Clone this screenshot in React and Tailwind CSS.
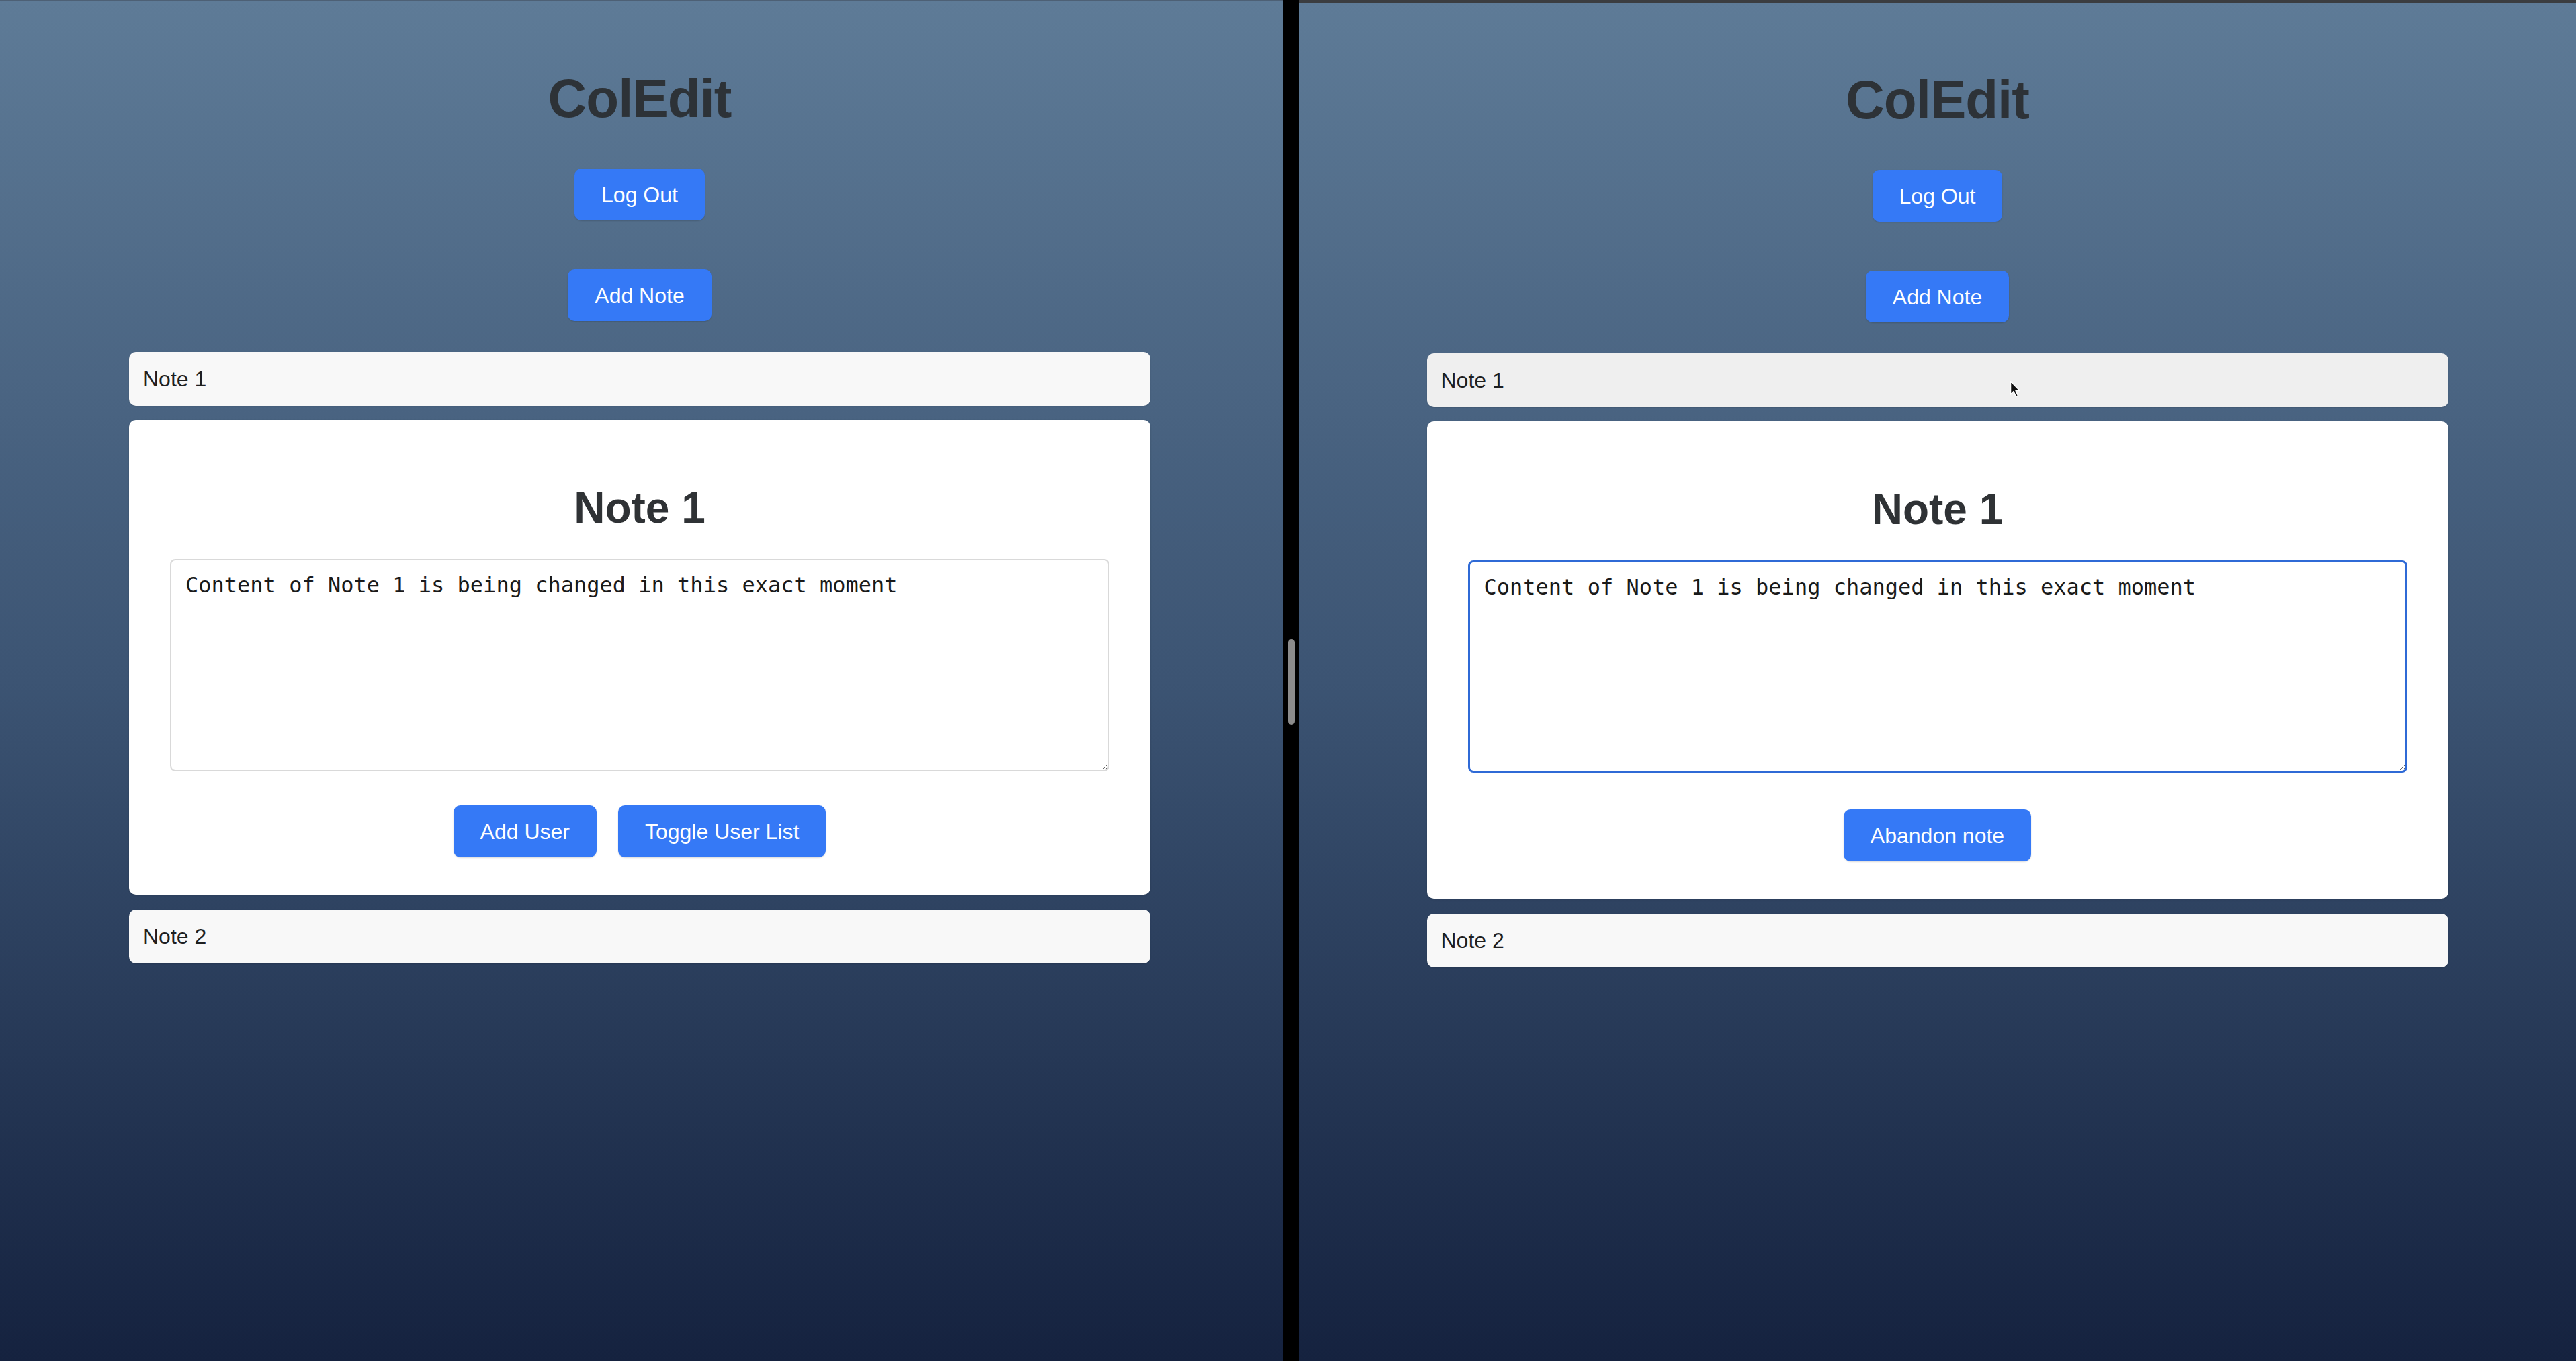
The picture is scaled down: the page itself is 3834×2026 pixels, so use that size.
import React from "react";

const sans = { fontFamily: '"Liberation Sans", Arial, sans-serif' };

function Btn({ children }) {
  return (
    <button className="h-[77px] px-[40px] rounded-[10px] bg-[#3579f6] text-white text-[32px] leading-none shadow-[0_1px_2px_rgba(0,0,0,0.15)]">
      {children}
    </button>
  );
}

function NoteBar({ label, hovered }) {
  return (
    <div
      className={
        "w-[1520px] h-[80px] rounded-[10px] flex items-center pl-[21px] text-[32px] text-[#1f1f1f] shadow-[0_1px_2px_rgba(0,0,0,0.12)] " +
        (hovered ? "bg-[#efefef]" : "bg-[#f8f8f8]")
      }
    >
      {label}
    </div>
  );
}

function Pane({ right }) {
  return (
    <div
      className={
        "relative h-full flex flex-col items-center bg-gradient-to-b from-[#5e7b97] via-[#3c5473] to-[#15223f] " +
        (right ? "w-[1901px]" : "w-[1910px] pr-[6px]")
      }
      style={sans}
    >
      {right ? (
        <div className="absolute left-0 top-0 w-full h-[4px] bg-[#3b3d40]" />
      ) : (
        <div className="absolute left-0 top-0 w-full h-[2px] bg-[#4d6075]" />
      )}
      <h1
        className={
          "h-[92px] flex items-center text-[80px] font-bold text-[#2d3237] tracking-[-1px] " +
          (right ? "mt-[103px]" : "mt-[101px]")
        }
      >
        ColEdit
      </h1>
      <div className="mt-[58px]">
        <Btn>Log Out</Btn>
      </div>
      <div className="mt-[73px]">
        <Btn>Add Note</Btn>
      </div>
      <div className="mt-[46px]">
        <NoteBar label="Note 1" hovered={right} />
      </div>
      <div className="mt-[21px] w-[1520px] bg-white rounded-[10px] flex flex-col items-center pt-[94px] pb-[56px] shadow-[0_1px_3px_rgba(0,0,0,0.15)]">
        <h2 className="h-[74px] flex items-center text-[64px] font-bold text-[#2f3235]">
          Note 1
        </h2>
        <textarea
          readOnly
          defaultValue="Content of Note 1 is being changed in this exact moment"
          className={
            "mt-[39px] w-[1398px] h-[316px] rounded-[8px] bg-white px-[21px] py-[18px] text-[32px] leading-[38px] text-[#1a1a1a] outline-none " +
            (right
              ? "border-[3px] border-[#2f6ad6]"
              : "border-[2px] border-[#d9d9d9]")
          }
          style={{ fontFamily: '"DejaVu Sans Mono", "Liberation Mono", monospace' }}
        />
        <div className={"flex gap-[32px] " + (right ? "mt-[55px]" : "mt-[51px]")}>
          {right ? (
            <Btn>Abandon note</Btn>
          ) : (
            <>
              <Btn>Add User</Btn>
              <Btn>Toggle User List</Btn>
            </>
          )}
        </div>
      </div>
      <div className="mt-[22px]">
        <NoteBar label="Note 2" />
      </div>
      {right && (
        <svg
          className="absolute left-[1058px] top-[566px]"
          width="18"
          height="27"
          viewBox="0 0 18 27"
        >
          <path
            d="M1.5 1.5 L1.5 21 L6 16.5 L9.5 24.5 L12.5 23 L9 15.5 L15 15.5 Z"
            fill="#111"
            stroke="#fff"
            strokeWidth="1.5"
            strokeLinejoin="round"
          />
        </svg>
      )}
    </div>
  );
}

export default function App() {
  return (
    <div className="w-[3834px] h-[2026px] flex overflow-hidden bg-black">
      <Pane />
      <div className="w-[23px] h-full bg-black flex items-center justify-center">
        <div className="w-[10px] h-[128px] rounded-full bg-[#8c8c8c] mt-[4px]" />
      </div>
      <Pane right />
    </div>
  );
}
